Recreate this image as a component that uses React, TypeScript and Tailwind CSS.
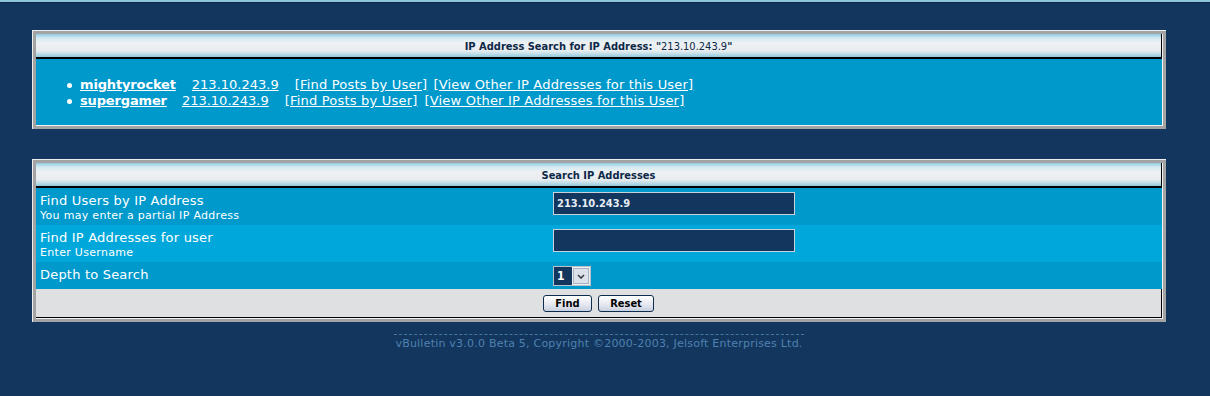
import React from "react";

function Panel({ children }: { children: React.ReactNode }) {
  return (
    <div className="ml-[32px] w-[1134px] border-l border-t border-[#eeeeee]">
      <div className="border-[3px] border-[#a3a3a3]">
        <div className="border-r border-b border-[#f2f2f2]">{children}</div>
      </div>
    </div>
  );
}

function Head({ children }: { children: React.ReactNode }) {
  return (
    <div className="flex h-[25px] items-center justify-center border-r border-b-2 border-black bg-[linear-gradient(to_bottom,#8fcbe2_0%,#d5eaf2_18%,#eef1f3_40%,#e8ecee_72%,#c2dee9_86%,#90c8dd_100%)] pt-[3px] font-['DejaVu_Sans_Condensed','DejaVu_Sans',sans-serif] text-[11px] font-stretch-condensed text-[#0c2848]">
      {children}
    </div>
  );
}

const users = [
  { name: "mightyrocket", gaps: ["ml-[16px]", "ml-[16px]", "ml-[6px]"] },
  { name: "supergamer", gaps: ["ml-[15px]", "ml-[16px]", "ml-[7px]"] },
];

export default function App() {
  return (
    <div className="min-h-[396px] bg-[#12365e] font-['DejaVu_Sans',sans-serif]">
      <div className="h-[2px] bg-[#8ec6dd]" />
      <div className="h-px bg-[#0b2846]" />

      <div className="pt-[27px]">
        <Panel>
          <Head>
            <span className="font-bold">IP Address Search for IP Address: &quot;</span>
            <span>213.10.243.9</span>
            <span className="font-bold">&quot;</span>
          </Head>
          <div className="bg-[#0099cc] pb-[16px] pt-[18px] text-[13px] leading-[16px] text-white">
            {users.map((u) => (
              <div key={u.name} className="flex items-center whitespace-nowrap">
                <span className="ml-[31px] mr-[8px] h-[5px] w-[5px] rounded-full bg-white" />
                <a className="font-bold tracking-[-0.15px] underline">{u.name}</a>
                <a className={`${u.gaps[0]} underline`}>213.10.243.9</a>
                <a className={`${u.gaps[1]} tracking-[0.2px] underline`}>[Find Posts by User]</a>
                <a className={`${u.gaps[2]} tracking-[0.2px] underline`}>
                  [View Other IP Addresses for this User]
                </a>
              </div>
            ))}
          </div>
        </Panel>
      </div>

      <div className="pt-[30px]">
        <Panel>
          <Head>
            <span className="font-bold">Search IP Addresses</span>
          </Head>

          <div className="grid grid-cols-[513px_1fr] bg-[#0099cc] text-white">
            <div className="px-[4px] pb-[3px] pt-[5px]">
              <div className="text-[13px] leading-[16px] tracking-[0.2px]">Find Users by IP Address</div>
              <div className="text-[11px] leading-[13px] tracking-[0.3px]">You may enter a partial IP Address</div>
            </div>
            <div className="px-[4px] pt-[4px]">
              <input
                readOnly
                defaultValue="213.10.243.9"
                className="block h-[23px] w-[242px] border border-[#c9d2db] bg-[#12365e] px-[3px] font-['DejaVu_Sans_Condensed','DejaVu_Sans',sans-serif] text-[11px] font-bold font-stretch-condensed text-[#e6edf4] outline-none"
              />
            </div>
          </div>

          <div className="grid grid-cols-[513px_1fr] bg-[#00a7da] text-white">
            <div className="px-[4px] pb-[3px] pt-[5px]">
              <div className="text-[13px] leading-[16px] tracking-[0.2px]">Find IP Addresses for user</div>
              <div className="text-[11px] leading-[13px] tracking-[0.3px]">Enter Username</div>
            </div>
            <div className="px-[4px] pt-[4px]">
              <input
                readOnly
                defaultValue=""
                className="block h-[23px] w-[242px] border border-[#c9d2db] bg-[#12365e] px-[3px] text-[11px] text-white outline-none"
              />
            </div>
          </div>

          <div className="grid grid-cols-[513px_1fr] bg-[#0099cc] text-white">
            <div className="px-[4px] pb-[6px] pt-[5px]">
              <div className="text-[13px] leading-[16px] tracking-[0.2px]">Depth to Search</div>
            </div>
            <div className="px-[4px] pt-[4px]">
              <div className="flex h-[20px] w-[38px] border border-[#b8c0c9] bg-[#f0f0f0]">
                <div className="flex w-[18px] items-center bg-[#12365e] pl-[3px] font-['DejaVu_Sans_Condensed','DejaVu_Sans',sans-serif] text-[12px] font-bold text-white">
                  1
                </div>
                <div className="m-px flex flex-1 items-center justify-center border border-[#a9b2c0] bg-[#dde1e9]">
                  <svg width="8" height="5" viewBox="0 0 8 5">
                    <path d="M1 1 L4 4 L7 1" fill="none" stroke="#3a3f48" strokeWidth="1.6" />
                  </svg>
                </div>
              </div>
            </div>
          </div>

          <div className="flex h-[29px] items-center justify-center gap-[6px] border-r border-b border-black bg-[#dfe0e2] font-['DejaVu_Sans_Condensed','DejaVu_Sans',sans-serif] font-stretch-condensed">
            <button className="h-[17px] w-[49px] rounded-[3px] border border-[#0d2c4e] bg-[linear-gradient(to_bottom,#ffffff,#e6e9f0_55%,#c8d0df)] text-[11px] font-bold leading-none text-black">
              Find
            </button>
            <button className="h-[17px] w-[56px] rounded-[3px] border border-[#0d2c4e] bg-[linear-gradient(to_bottom,#ffffff,#e6e9f0_55%,#c8d0df)] text-[11px] font-bold leading-none text-black">
              Reset
            </button>
          </div>
        </Panel>
      </div>

      <div className="ml-[32px] mt-[12px] flex w-[1134px] justify-center">
        <div className="w-[410px] border-t border-dashed border-[#4676a3] pt-[2px] text-center text-[11px] leading-[13px] tracking-[0.22px] text-[#5081af]">
          vBulletin v3.0.0 Beta 5, Copyright ©2000-2003, Jelsoft Enterprises Ltd.
        </div>
      </div>
    </div>
  );
}
